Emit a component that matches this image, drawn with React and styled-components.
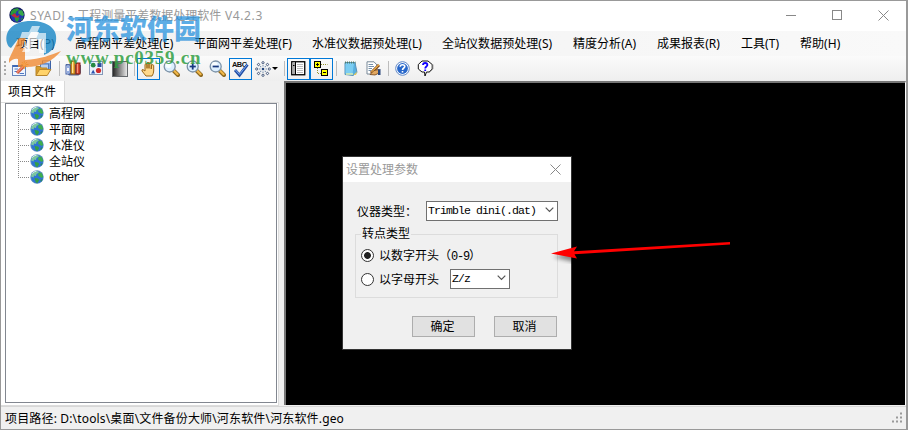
import React, { useState } from "react";
import styled, { createGlobalStyle } from "styled-components";

const menus = [
  { label: "项目(P)", width: 59 },
  { label: "高程网平差处理(E)", width: 119 },
  { label: "平面网平差处理(F)", width: 118 },
  { label: "水准仪数据预处理(L)", width: 130 },
  { label: "全站仪数据预处理(S)", width: 131 },
  { label: "精度分析(A)", width: 84 },
  { label: "成果报表(R)", width: 84 },
  { label: "工具(T)", width: 59 },
  { label: "帮助(H)", width: 50 },
];

const files = ["高程网", "平面网", "水准仪", "全站仪", "other"];

function Globe({ size = 14, dark }) {
  return (
    <svg width={size} height={size} viewBox="0 0 14 14">
      <circle cx="7" cy="7" r="6.7" fill={dark ? "#101a5c" : "#5f8fc0"} />
      <circle cx="7.2" cy="7.4" r="5.8" fill={dark ? "#2238b0" : "#2f74d4"} />
      <path d="M2 3.5Q4 .8 7.5 1L9 2.5 6.5 4 6 6 4 5.5 3.6 7.5 1 6.5Z" fill={dark ? "#2a9a38" : "#7cc6a0"} />
      <path d="M8.5 3L11.5 2.8 13.2 6.5 12 8 10 7 8 5.5Z" fill={dark ? "#38a848" : "#3fae4e"} />
      <path d="M4.5 8L8 8.5 9.2 10 7.5 13 5.8 12.5Z" fill={dark ? "#2a9a38" : "#35a043"} />
      <path d="M10.5 10L12.5 9 11 12Z" fill="#278e44" />
      {dark && <path d="M2 7.5L5 5.5 7 8 9.5 6.5 8 9.5 4.5 9Z" fill="#c22a3a" />}
      {!dark && <path d="M2.2 3.6Q3.8 1.4 6.5 1.2" stroke="#d4ecf0" fill="none" />}
    </svg>
  );
}

function Lens({ sign }) {
  return (
    <svg width="17" height="17" viewBox="0 0 17 17">
      <path d="M10.5 10.5L15 15" stroke="#8d681e" strokeWidth="4" strokeLinecap="round" />
      <path d="M11.2 10.8L14.6 14.2" stroke="#f2b84a" strokeWidth="2.2" strokeLinecap="round" />
      <circle cx="6.7" cy="6.5" r="5.5" fill="#dcefff" stroke="#7d93a8" strokeWidth="1.3" />
      <circle cx="5.5" cy="5" r="3" fill="#f8fdff" />
      {sign && <path d="M3.6 6.5H9.8" stroke="#173a80" strokeWidth="1.8" />}
      {sign === "+" && <path d="M6.7 3.4V9.6" stroke="#173a80" strokeWidth="1.8" />}
    </svg>
  );
}

const icons = {
  create: (
    <svg width="17" height="16" viewBox="0 0 17 16">
      <rect x=".5" y="4.5" width="13" height="10" fill="#eef5ff" stroke="#6685bb" />
      <path d="M.5 5H13" stroke="#3d68b5" strokeWidth="2" />
      <path d="M2.5 8H6M2.5 10.5H5M7.5 12.5H12" stroke="#4f78c4" />
      <path d="M5 12L12 5.2" stroke="#c04a30" strokeWidth="3" />
      <path d="M5 11.6L12 4.8" stroke="#f2856c" strokeWidth="1.6" />
      <path d="M12.3 0V8M9 3.5H16.5M9.8 1L15 6.3M15 1L9.8 6.3" stroke="#f5b63c" />
      <circle cx="12.3" cy="3.6" r="1.5" fill="#fff2b5" />
    </svg>
  ),
  open: (
    <svg width="17" height="17" viewBox="0 0 17 17">
      <rect x="7.5" y="1" width="8" height="9" fill="#7ca5e4" stroke="#3b62a6" />
      <path d="M8 2H15" stroke="#dfecff" strokeWidth="1.5" />
      <rect x="5.5" y="4" width="8" height="7" fill="#b7d1f5" stroke="#507bbd" />
      <path d="M1 15.5V6.5H5L6.5 8H12V10" fill="#d89d29" stroke="#b8862c" />
      <path d="M1 15.5L4.5 9.5H15.8L12.2 15.5Z" fill="#ffd36a" stroke="#b8862c" />
    </svg>
  ),
  books: (
    <svg width="17" height="17" viewBox="0 0 17 17">
      <path d="M1 4V12L4 15.5H13.5L16 13V5" fill="#5a6b93" />
      <rect x="1" y="5" width="4" height="9" fill="#f2f5ff" stroke="#3d5da6" />
      <path d="M2 7H4M2 12H4" stroke="#3265c4" />
      <rect x="6" y="1" width="4" height="13" fill="#efb13a" stroke="#93570b" />
      <path d="M7.5 2V13" stroke="#ffe69a" />
      <rect x="11" y="3" width="4" height="11" fill="#dc4a34" stroke="#842015" />
      <path d="M12.4 4V13" stroke="#f99c82" />
    </svg>
  ),
  shapes: (
    <svg width="15" height="15" viewBox="0 0 15 15">
      <rect x=".5" y=".5" width="13" height="13" fill="#eaf1fb" stroke="#8498b8" />
      <circle cx="4.2" cy="4.2" r="2.4" fill="#258943" />
      <rect x="8.5" y="2" width="4" height="4" fill="#2d4f9f" />
      <circle cx="9.5" cy="9.5" r="2.6" fill="#cf2d2d" />
      <path d="M2 12.5L4.2 8.8 6.2 12.5Z" fill="#2d55af" />
    </svg>
  ),
  shade: (
    <svg width="16" height="16" viewBox="0 0 16 16">
      <defs>
        <linearGradient id="shade">
          <stop offset="0" stopColor="#222" />
          <stop offset="1" stopColor="#eee" />
        </linearGradient>
      </defs>
      <rect x=".5" y=".5" width="15" height="15" fill="url(#shade)" stroke="#64686c" />
    </svg>
  ),
  hand: (
    <svg width="16" height="16" viewBox="0 0 16 16">
      <path
        d="M5 15L1 10Q.5 8.4 2 8.6L4 10V3.4Q5 2 6 3.4V7.4 2Q7 .5 8 2V7.4 2.2Q9.2 1 10.2 2.5V8L10.7 4Q12 3 12.7 4.4V10Q12.5 13 11 15Z"
        fill="#ffd98c"
        stroke="#9a6718"
      />
    </svg>
  ),
  find: <Lens />,
  zoomIn: <Lens sign="+" />,
  zoomOut: <Lens sign="-" />,
  spell: (
    <svg width="18" height="18" viewBox="0 0 18 18">
      <text x="0" y="6.5" fontFamily="Liberation Sans" fontSize="7.4" fontWeight="bold" textLength="15" fill="#111">ABC</text>
      <path d="M3 10L7.5 15.2 15.5 4.7" stroke="#234fa5" strokeWidth="2.8" fill="none" />
      <path d="M3.4 10L7.5 14.4 15 4.8" stroke="#7ba8f3" fill="none" />
    </svg>
  ),
  table: (
    <svg width="15" height="15" viewBox="0 0 15 15">
      <rect x=".75" y=".75" width="13" height="13" fill="#fff" stroke="#000" strokeWidth="1.3" />
      <rect x="1.5" y="1.5" width="2.5" height="11.5" fill="#ababab" />
      <path d="M4.5 1V14" stroke="#000" />
      <path d="M6 3.5H12M6 5.5H12M6 7.5H12M6 9.5H12M6 11.5H12" stroke="#bbb" />
      <path d="M2 4.5H3.5" stroke="#000" />
    </svg>
  ),
  nodes: (
    <svg width="15" height="15" viewBox="0 0 15 15">
      <path d="M3.5 7V12.5H8M7 3.5H13.5" stroke="#96952e" strokeDasharray="1 1" fill="none" />
      <rect x=".5" y=".5" width="6" height="6" fill="#ff0" stroke="#000" />
      <path d="M2 3.5H5M3.5 2V5" stroke="#000" />
      <rect x="7.5" y="8.5" width="6" height="6" fill="#ff0" stroke="#000" />
      <path d="M9 11.5H12" stroke="#000" />
    </svg>
  ),
  note: (
    <svg width="14" height="15" viewBox="0 0 14 15">
      <path d="M1 1.5H11L13 11.5 9 14.5 1 13.5Z" fill="#59b0df" stroke="#5992ba" />
      <path d="M1.5 2H10L8.5 13 1.5 12.5Z" fill="#7bcdf2" />
      <path d="M1 1.5H11.5" stroke="#4f7b67" strokeWidth="2" strokeDasharray="1 1" />
      <path d="M9.5 14L13 10.5 12 14Z" fill="#e4ca5c" />
      <path d="M2 13H9" stroke="#dceeb2" strokeWidth="1.5" />
    </svg>
  ),
  edit: (
    <svg width="15" height="15" viewBox="0 0 15 15">
      <path d="M1 .8H8L11 4V13H1Z" fill="#fff" stroke="#788998" />
      <path d="M2.5 3.5H7M2.5 5.5H8M2.5 7.5H6M2.5 9.5H5" stroke="#7690aa" />
      <path d="M5 12L13 4" stroke="#7b431c" strokeWidth="3" />
      <path d="M5.5 11.2L13 3.6" stroke="#f3b74b" strokeWidth="1.3" />
      <path d="M4 13.5L8 9.5 13 8.5V12L9 14Z" fill="#e2a860" stroke="#764419" strokeWidth=".8" />
      <path d="M12 8.5L14.5 8V14H12Z" fill="#2b477b" />
    </svg>
  ),
  help: (
    <svg width="15" height="15" viewBox="0 0 15 15">
      <circle cx="7.5" cy="7.5" r="6.8" fill="#fff" stroke="#5d86c6" />
      <circle cx="7.5" cy="7.5" r="5.4" fill="#2868cb" />
      <path d="M5.2 5.8Q5.2 3.7 7.5 3.7T9.8 5.6C9.8 7.1 7.5 7 7.5 9M7.5 10V11.6" stroke="#fff" strokeWidth="1.6" fill="none" />
    </svg>
  ),
  about: (
    <svg width="17" height="17" viewBox="0 0 17 17">
      <path d="M5 1H11L15.2 4.5V9L12 12H9.5L8 16 7.5 12H5L1.3 9V4.5Z" fill="#fff" stroke="#111" />
      <path d="M12 12.5L15.8 9V4.5" stroke="#777" fill="none" />
      <path d="M6 5Q6 3 8.2 3T10.4 5C10.4 6.5 8.2 6.4 8.2 8.4M8.2 9.4V11" stroke="#10f" strokeWidth="1.8" fill="none" />
    </svg>
  ),
};

function Burst() {
  const dots = [0, 45, 90, 135, 180, 225, 270, 315];
  return (
    <svg width="16" height="16" viewBox="0 0 16 16">
      {dots.map((a) => (
        <g key={a} transform={`rotate(${a} 8 8)`}>
          <circle cx="8" cy="1.7" r="1.1" fill="#fff" stroke="#354b70" strokeWidth=".9" />
          <path d="M8 4V5.5" stroke="#738cab" />
        </g>
      ))}
      <circle cx="8" cy="8" r="1.3" fill="#26477d" />
    </svg>
  );
}

function Chevron() {
  return (
    <svg width="9" height="6" viewBox="0 0 9 6">
      <path d="M.7 .7L4.5 4.5 8.3 .7" stroke="#555" strokeWidth="1.2" fill="none" />
    </svg>
  );
}

function Tool({ name, active }) {
  return <ToolButton $active={active}>{icons[name]}</ToolButton>;
}

function Watermark() {
  return (
    <Brand>
      <svg width="62" height="68" viewBox="0 0 62 68">
        <path d="M6 42C3 30 12 20 30 20 47 20 57 28 55 40 54 47 49 52 43 54V38H35L38 31H30L26 38H17L10 47Q7 46 6 42Z" fill="#1686c5" opacity=".8" />
        <path d="M8 58L18 37H25L20 47H24V59C40 58 50 54 60 50 52 60 40 66 25 66H17V58Q12 57 8 62Z" fill="#f08a32" opacity=".8" />
        <path d="M31 25H39L36 32H45V52H38V39H34L28 51H21L28 37H19L21 31H28Z" fill="#fff" opacity=".65" />
      </svg>
      <BrandText>
        <BrandName>河东软件园</BrandName>
        <BrandUrl>www.pc0359.cn</BrandUrl>
      </BrandText>
    </Brand>
  );
}

function ParamsDialog() {
  const [kind, setKind] = useState("number");

  return (
    <Dialog>
      <DialogTitle>
        <span>设置处理参数</span>
        <svg width="11" height="11" viewBox="0 0 11 11">
          <path d="M.5 .5L10.5 10.5M10.5 .5L.5 10.5" stroke="#888" />
        </svg>
      </DialogTitle>
      <DialogBody>
        <Field>
          <FieldLabel>仪器类型：</FieldLabel>
          <Select $width={132}>
            Trimble dini(.dat)
            <Chevron />
          </Select>
        </Field>
        <Group>
          <Legend>转点类型</Legend>
          <Option onClick={() => setKind("number")}>
            <Radio $checked={kind === "number"} />
            <OptionText>以数字开头（<Mono $large>0-9</Mono>）</OptionText>
          </Option>
          <Option onClick={() => setKind("letter")}>
            <Radio $checked={kind === "letter"} />
            <OptionText>以字母开头</OptionText>
            <Select $width={60}>
              Z/z
              <Chevron />
            </Select>
          </Option>
        </Group>
        <Actions>
          <Button>确定</Button>
          <Button>取消</Button>
        </Actions>
      </DialogBody>
    </Dialog>
  );
}

export default function App() {
  return (
    <>
      <GlobalStyle />
      <Window>
        <TitleBar>
          <Globe size={16} dark />
          <Title>
            <Latin>SYADJ - </Latin>工程测量平差数据处理软件<Latin> V4.2.3</Latin>
          </Title>
          <Controls>
            <svg width="11" height="11"><path d="M0 5.5H10" stroke="#888" /></svg>
            <svg width="11" height="11"><rect x=".5" y=".5" width="9" height="9" fill="none" stroke="#888" /></svg>
            <svg width="11" height="11"><path d="M.5 .5L10.5 10.5M10.5 .5L.5 10.5" stroke="#888" /></svg>
          </Controls>
        </TitleBar>
        <MenuBar>
          {menus.map((menu) => (
            <MenuItem key={menu.label} $width={menu.width}>{menu.label}</MenuItem>
          ))}
        </MenuBar>
        <Toolbar>
          <Grip />
          <Tool name="create" />
          <Tool name="open" />
          <Separator $wide />
          <Tool name="books" />
          <Tool name="shapes" />
          <Tool name="shade" />
          <Separator />
          <Tool name="hand" active />
          <Tool name="find" />
          <Tool name="zoomIn" />
          <Tool name="zoomOut" />
          <Tool name="spell" active />
          <DropButton>
            <Burst />
            <Caret />
          </DropButton>
          <Separator />
          <Tool name="table" active />
          <Tool name="nodes" active />
          <Separator />
          <Tool name="note" />
          <Tool name="edit" />
          <Separator />
          <Tool name="help" />
          <Tool name="about" />
        </Toolbar>
        <Main>
          <SidePanel>
            <Tab>项目文件</Tab>
            <TabPage>
              <Tree>
                {files.map((file) => (
                  <TreeItem key={file}>
                    <Globe />
                    {file === "other" ? <Mono $large>{file}</Mono> : <span>{file}</span>}
                  </TreeItem>
                ))}
              </Tree>
            </TabPage>
          </SidePanel>
          <Canvas>
            <ParamsDialog />
            <Arrow width="190" height="26" viewBox="0 0 190 26">
              <path d="M6 16L30 10 28 14 184 4.5V7.5L29 17 31 22Z" fill="#000" opacity=".45" filter="blur(2px)" transform="translate(1 3)" />
              <path d="M5 15.5L31 8.5 28 13.2 184 4V6.6L28.5 16.3 31 20.5Z" fill="#f00" />
            </Arrow>
          </Canvas>
        </Main>
        <StatusBar>
          <span>项目路径: D:\tools\桌面\文件备份大师\河东软件\河东软件.geo</span>
          <svg width="12" height="12">
            <path d="M8 1.5H10M4 5.5H6M8 5.5H10M0 9.5H2M4 9.5H6M8 9.5H10" stroke="#9a9a9a" strokeWidth="2" />
          </svg>
        </StatusBar>
        <Watermark />
      </Window>
    </>
  );
}

const GlobalStyle = createGlobalStyle`
  * {
    box-sizing: border-box;
  }

  body {
    margin: 0;
    overflow: hidden;
    font-family: "Noto Sans", "Noto Sans CJK SC", sans-serif;
    font-size: 12px;
    color: #000;
  }

  svg {
    display: block;
    flex: none;
  }
`;

const Window = styled.div`
  position: relative;
  display: flex;
  flex-direction: column;
  width: 908px;
  height: 430px;
  border: 1px solid #999;
  border-width: 1px 2px 1px 1px;
  background-color: #f0f0f0;
  white-space: nowrap;
`;

const TitleBar = styled.div`
  display: flex;
  align-items: center;
  flex: none;
  height: 30px;
  padding: 0 17px 2px 8px;
  background-color: #fff;
`;

const Title = styled.span`
  margin-left: 5px;
  color: #999;
  white-space: pre;
`;

const Latin = styled.span`
  letter-spacing: 0.6px;
`;

const Controls = styled.div`
  display: flex;
  gap: 35px;
  margin-left: auto;
`;

const MenuBar = styled.div`
  display: flex;
  align-items: center;
  flex: none;
  height: 25px;
  padding: 0 0 1px 15px;
  background: linear-gradient(90deg, #f1f1f1, #f9f9f9);
`;

const MenuItem = styled.span`
  width: ${(props) => props.$width}px;
  letter-spacing: 0.04px;
`;

const Toolbar = styled.div`
  display: flex;
  align-items: center;
  flex: none;
  height: 25px;
  background: linear-gradient(#fbfbfb, #eee);
`;

const Grip = styled.div`
  width: 2px;
  height: 15px;
  margin: 0 3px;
  background: repeating-linear-gradient(#aaa 0 2px, transparent 2px 4px);
`;

const ToolButton = styled.div`
  display: flex;
  justify-content: center;
  align-items: center;
  width: 23px;
  height: 22px;
  border: 1px solid ${(props) => (props.$active ? "#0078d7" : "transparent")};
`;

const Separator = styled.div`
  width: 1px;
  height: 15px;
  margin: 0 2px 0 ${(props) => (props.$wide ? 4 : 3)}px;
  background-color: #bdbdbd;
`;

const DropButton = styled.div`
  display: flex;
  align-items: center;
  gap: 1px;
  width: 29px;
  padding-left: 3px;
`;

const Caret = styled.div`
  border: 3px solid transparent;
  border-top-color: #000;
  border-bottom: 0;
`;

const Main = styled.div`
  display: flex;
  flex: 1;
  min-height: 0;
  gap: 5px;
`;

const SidePanel = styled.div`
  display: flex;
  flex-direction: column;
  width: 278px;
`;

const Tab = styled.div`
  width: 64px;
  height: 21px;
  padding-left: 7px;
  border-right: 1px solid #d9d9d9;
  background-color: #fff;
  line-height: 21px;
`;

const TabPage = styled.div`
  flex: 1;
  padding: 0 1px 2px 4px;
  border: 1px solid #dcdcdc;
  border-left: 0;
  background-color: #fff;
`;

const Tree = styled.div`
  height: 100%;
  padding: 1px 0 0 12px;
  border: 1px solid #828790;
  background-color: #fff;
`;

const TreeItem = styled.div`
  display: flex;
  align-items: center;
  height: 16px;
  line-height: 16px;

  &::before {
    content: "";
    width: 12px;
    height: 16px;
    background:
      repeating-linear-gradient(90deg, #888 0 1px, transparent 1px 2px) 0 8px / 11px 1px no-repeat,
      repeating-linear-gradient(#888 0 1px, transparent 1px 2px) 0 0 / 1px 16px no-repeat;
  }

  &:first-child::before {
    background-position: 0 8px, 0 8px;
  }

  &:last-child::before {
    background-size: 11px 1px, 1px 8px;
  }

  span {
    margin-left: 5px;
    padding-top: 1px;
  }
`;

const Mono = styled.span`
  font-family: "Liberation Mono", monospace;
  font-size: ${(props) => (props.$large ? 12 : 11)}px;
  letter-spacing: ${(props) => (props.$large ? -1.2 : -0.6)}px;
`;

const Canvas = styled.div`
  position: relative;
  flex: 1;
  margin-bottom: 1px;
  border-top: 2px solid #777;
  border-left: 2px solid #777;
  border-right: 1px solid #fff;
  background-color: #000;
`;

const Dialog = styled.div`
  position: absolute;
  left: 56px;
  top: 73px;
  width: 230px;
  height: 194px;
  border: 1px solid #333;
  background-color: #f0f0f0;
`;

const DialogTitle = styled.div`
  display: flex;
  justify-content: space-between;
  align-items: center;
  height: 25px;
  padding: 0 10px 1px 3px;
  background-color: #fff;
  color: #999;
`;

const DialogBody = styled.div`
  padding: 19px 13px 0 12px;
`;

const Field = styled.div`
  display: flex;
  align-items: center;
  justify-content: space-between;
  height: 20px;
`;

const FieldLabel = styled.span`
  padding-left: 2px;
`;

const Select = styled.div`
  display: flex;
  align-items: center;
  justify-content: space-between;
  width: ${(props) => props.$width}px;
  height: 20px;
  padding: 0 3px 2px 1px;
  border: 1px solid #707070;
  background-color: #fff;
  font-family: "Liberation Mono", monospace;
  font-size: 11.5px;
  letter-spacing: -0.9px;
`;

const Group = styled.fieldset`
  height: 72px;
  margin: 5px 0 0;
  padding: 1px 0 0 5px;
  border: 1px solid #dcdcdc;
`;

const Legend = styled.legend`
  height: 16px;
  padding: 0 1px;
  line-height: 16px;
`;

const Option = styled.div`
  display: flex;
  align-items: center;
  height: 24px;

  ${Select} {
    margin-left: 11px;
  }
`;

const Radio = styled.span`
  flex: none;
  width: 13px;
  height: 13px;
  border: 1px solid #333;
  border-radius: 50%;
  background: ${(props) =>
    props.$checked ? "radial-gradient(circle, #222 3px, #fff 3.8px)" : "#fff"};
`;

const OptionText = styled.span`
  margin-left: 5px;
`;

const Actions = styled.div`
  display: flex;
  justify-content: flex-end;
  gap: 19px;
  margin: 18px 1px 0 0;
`;

const Button = styled.button`
  width: 63px;
  height: 21px;
  padding: 0 2px 0 0;
  border: 1px solid #adadad;
  background-color: #e1e1e1;
  font: inherit;
  line-height: 17px;
`;

const Arrow = styled.svg`
  position: absolute;
  left: 260px;
  top: 155px;
`;

const StatusBar = styled.div`
  display: flex;
  align-items: center;
  justify-content: space-between;
  flex: none;
  height: 23px;
  padding: 0 2px 0 4px;
  border-top: 1px solid #d7d7d7;
  letter-spacing: 0.16px;
`;

const Brand = styled.div`
  position: absolute;
  left: 0;
  top: 0;
  display: flex;
  gap: 3px;
  pointer-events: none;
`;

const BrandText = styled.div`
  display: flex;
  flex-direction: column;
  padding-top: 10px;
`;

const BrandName = styled.span`
  height: 37px;
  line-height: 35px;
  font-size: 27px;
  font-weight: 900;
  color: rgba(30, 142, 220, 0.72);
`;

const BrandUrl = styled.span`
  height: 20px;
  line-height: 20px;
  font-family: "Liberation Serif", serif;
  font-size: 19px;
  font-weight: 700;
  letter-spacing: 0.75px;
  color: rgba(48, 158, 66, 0.85);
`;
